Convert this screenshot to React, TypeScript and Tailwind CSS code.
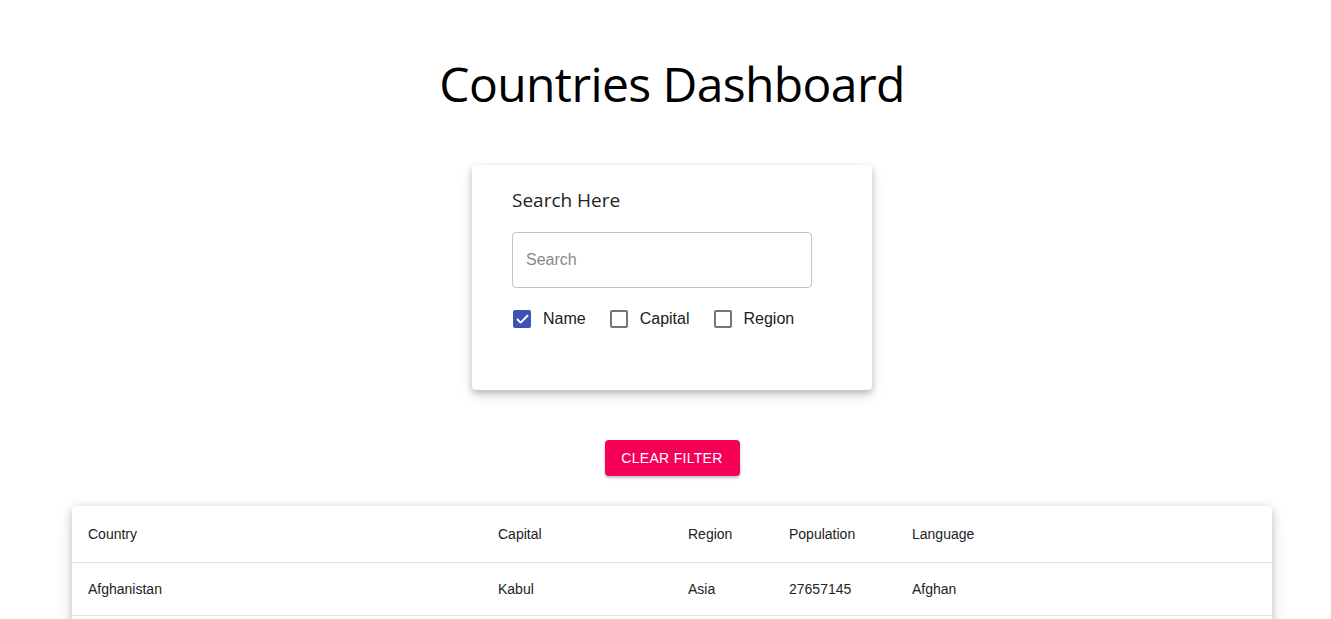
import { Check } from "lucide-react";

const rows = [
  { country: "Afghanistan", capital: "Kabul", region: "Asia", population: "27657145", language: "Afghan" },
];

const Box = ({ checked }: { checked?: boolean }) =>
  checked ? (
    <span className="w-[18px] h-[18px] rounded-[2px] bg-[#3f51b5] flex items-center justify-center">
      <Check size={15} strokeWidth={3} className="text-white" />
    </span>
  ) : (
    <span className="w-[18px] h-[18px] rounded-[2px] border-2 border-[#757575]" />
  );

const Option = ({ label, checked }: { label: string; checked?: boolean }) => (
  <label className="flex items-center gap-3">
    <Box checked={checked} />
    <span className="text-[16px] text-[#212121]">{label}</span>
  </label>
);

export default function App() {
  return (
    <div className="h-screen overflow-hidden bg-white pl-[13px] font-['Liberation_Sans',Arial,sans-serif]">
      <h1 className="pt-[52px] text-center text-[48px] leading-[64px] text-black font-['Open_Sans',sans-serif] tracking-[-0.6px]">
        Countries Dashboard
      </h1>

      <div className="mt-[49px] flex justify-center">
        <div className="w-[400px] h-[225px] bg-white rounded px-10 pt-[23px] shadow-[0_3px_6px_rgba(0,0,0,0.2),0_6px_14px_rgba(0,0,0,0.12)]">
          <p className="text-[19px] leading-[22px] text-[#222] font-['Open_Sans',sans-serif] pt-[1px]">Search Here</p>
          <div className="mt-[21px] w-[300px] h-[56px] border border-[#c4c4c4] rounded flex items-center px-[13px]">
            <input
              placeholder="Search"
              className="w-full outline-none text-[16px] placeholder:text-[#888] text-[#222]"
            />
          </div>
          <div className="mt-[19px] flex items-center gap-6 pl-[1px]">
            <Option label="Name" checked />
            <Option label="Capital" />
            <Option label="Region" />
          </div>
        </div>
      </div>

      <div className="mt-[50px] flex justify-center">
        <button className="w-[135px] h-[36px] rounded bg-[#f50057] text-white text-[14px] uppercase tracking-[0.3px] shadow-[0_2px_3px_rgba(0,0,0,0.25)]">
          Clear Filter
        </button>
      </div>

      <div className="mt-[30px] mx-auto w-[1200px] bg-white rounded shadow-[0_2px_8px_rgba(0,0,0,0.2),0_6px_20px_rgba(0,0,0,0.1)]">
        <table className="w-full text-[14px] text-[#222] border-collapse">
          <thead>
            <tr className="h-[56px] border-b border-[#e0e0e0] text-left">
              <th className="w-[410px] px-4 pt-[2px] font-normal">Country</th>
              <th className="w-[190px] px-4 pt-[2px] font-normal">Capital</th>
              <th className="w-[101px] px-4 pt-[2px] font-normal">Region</th>
              <th className="w-[123px] px-4 pt-[2px] font-normal">Population</th>
              <th className="px-4 pt-[2px] font-normal">Language</th>
            </tr>
          </thead>
          <tbody>
            {rows.map((r) => (
              <tr key={r.country} className="h-[53px] border-b border-[#e0e0e0]">
                <td className="px-4 pt-[2px]">{r.country}</td>
                <td className="px-4 pt-[2px]">{r.capital}</td>
                <td className="px-4 pt-[2px]">{r.region}</td>
                <td className="px-4 pt-[2px]">{r.population}</td>
                <td className="px-4 pt-[2px]">{r.language}</td>
              </tr>
            ))}
            <tr className="h-[53px]">
              <td className="px-4" colSpan={5}></td>
            </tr>
          </tbody>
        </table>
      </div>
    </div>
  );
}
